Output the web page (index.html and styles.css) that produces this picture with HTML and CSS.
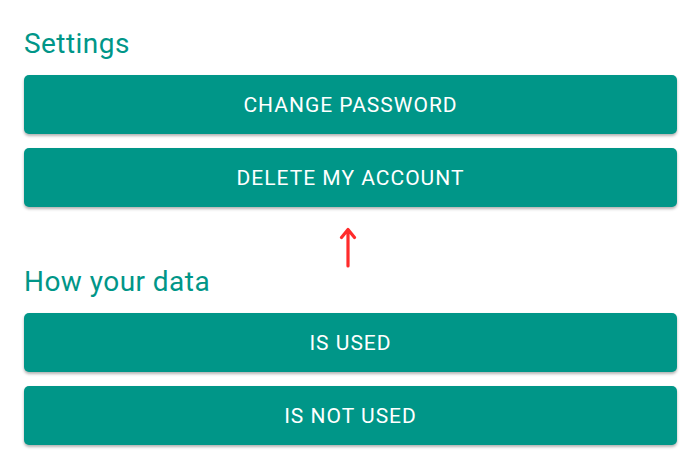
FILE: index.html
```html
<!DOCTYPE html>
<html>
<head>
<meta charset="utf-8">
<link rel="stylesheet" href="styles.css">
</head>
<body>
<main class="page">
  <section class="group">
    <h2 class="group-title">Settings</h2>
    <button class="action">CHANGE PASSWORD</button>
    <button class="action">DELETE MY ACCOUNT</button>
  </section>
  <section class="group group-data">
    <h2 class="group-title">How your data</h2>
    <button class="action">IS USED</button>
    <button class="action">IS NOT USED</button>
  </section>
  <svg class="pointer" width="20" height="42" viewBox="0 0 20 42">
    <path d="M10 40 V3.5 M3.5 11.5 L10 3.5 L16.5 11.5" fill="none" stroke="#ff2b2b" stroke-width="3.2" stroke-linecap="round" stroke-linejoin="round"/>
  </svg>
</main>
</body>
</html>
```
FILE: styles.css
```css
html, body {
  margin: 0;
  padding: 0;
  background: #ffffff;
}
.page {
  position: relative;
  width: 696px;
  height: 456px;
  box-sizing: border-box;
  padding: 27px 19px 0 24px;
  font-family: Roboto, "Noto Sans", sans-serif;
}
.group {
  display: flex;
  flex-direction: column;
  gap: 14px;
}
.group-data {
  margin-top: 58px;
}
.group-title {
  margin: 0;
  font-size: 28px;
  line-height: 34px;
  font-weight: 400;
  letter-spacing: 0.45px;
  color: #009688;
}
.action {
  display: block;
  width: 100%;
  height: 59px;
  padding: 0;
  border: none;
  border-radius: 5px;
  background: #009688;
  color: #ffffff;
  font-family: Roboto, "Noto Sans", sans-serif;
  font-size: 21px;
  line-height: 24px;
  letter-spacing: 1px;
  box-shadow: 0 2px 3px rgba(0,0,0,0.3);
}
.pointer {
  position: absolute;
  left: 338px;
  top: 226px;
}
```
